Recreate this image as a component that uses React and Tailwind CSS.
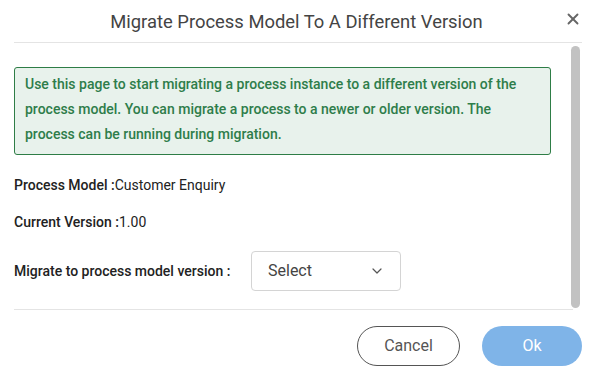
import { X, ChevronDown } from "lucide-react";

export default function App() {
  return (
    <div className="w-[593px] h-[377px] bg-white flex flex-col font-['Roboto',sans-serif] text-[#333]">
      {/* Header */}
      <div className="relative h-[42px] flex items-center justify-center">
        <h1 className="text-[18.4px] text-[#444] mt-[2px]">Migrate Process Model To A Different Version</h1>
        <button className="absolute right-[11px] top-[10px] text-[#666]">
          <X size={18} strokeWidth={2.5} />
        </button>
      </div>
      <div className="ml-[14px] mr-[11px] border-t border-[#e4e4e4]" />

      {/* Body */}
      <div className="flex h-[266px]">
        <div className="flex-1 flex flex-col pl-[14px] pr-[20px] pt-[24px]">
          <div className="border border-[#2e7d46] bg-[#e8f2ec] rounded-[3px] px-[10px] pt-[4px] pb-[7px] text-[14px] leading-[25px] font-medium text-[#2e7d4a]">
            Use this page to start migrating a process instance to a different version of the process model. You can migrate a process to a newer or older version. The process can be running during migration.
          </div>
          <div className="mt-[20px] text-[14px] leading-[20px] text-[#222]">
            <span className="font-medium">Process Model :</span>Customer Enquiry
          </div>
          <div className="mt-[17px] text-[14px] leading-[20px] text-[#222]">
            <span className="font-medium">Current Version :</span>1.00
          </div>
          <div className="mt-[19px] flex items-center text-[14px] text-[#222]">
            <span className="font-medium w-[237px]">Migrate to process model version :</span>
            <div className="w-[150px] h-[40px] border border-[#d4d4d4] rounded-[4px] flex items-center justify-between pl-[16px] pr-[15px]">
              <span className="text-[16px] text-[#444]">Select</span>
              <ChevronDown size={16} strokeWidth={1.8} className="text-[#555]" />
            </div>
          </div>
        </div>
        <div className="w-[10px] mr-[12px] pt-[3px] pb-[1px]">
          <div className="h-full w-[9px] rounded-full bg-[#c2c2c2]" />
        </div>
      </div>

      {/* Footer */}
      <div className="ml-[14px] mr-[20px] border-t border-[#e4e4e4]" />
      <div className="flex justify-end gap-[22px] pr-[11px] pt-[16px]">
        <button className="w-[103px] h-[40px] rounded-full border border-[#555] text-[16px] text-[#555]">Cancel</button>
        <button className="w-[100px] h-[40px] rounded-full bg-[#7fb4e8] text-[16px] text-white">Ok</button>
      </div>
    </div>
  );
}
